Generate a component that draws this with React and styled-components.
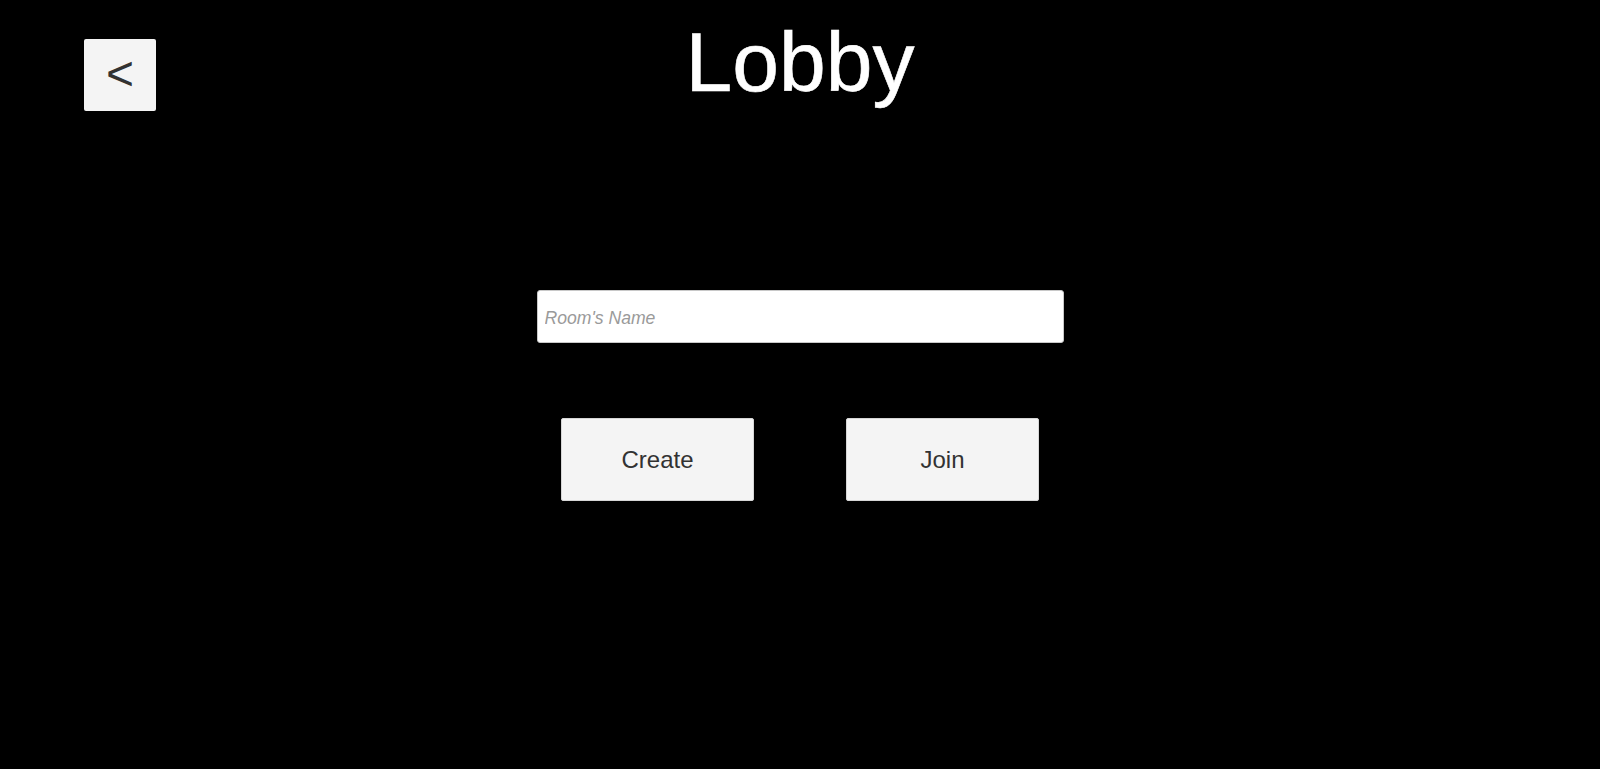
import styled, { createGlobalStyle } from 'styled-components';

const GlobalStyle = createGlobalStyle`
    html, body {
        margin: 0;
        padding: 0;
        background-color: #000;
    }
    * {
        box-sizing: border-box;
    }
`

export default function App () {
    return(
        <Page>
            <GlobalStyle />
            <Header>
                <BackButton>&lt;</BackButton>
                <Title>Lobby</Title>
                <span />
            </Header>
            <Form>
                <RoomInput placeholder="Room's Name" />
                <Actions>
                    <ActionButton>Create</ActionButton>
                    <ActionButton>Join</ActionButton>
                </Actions>
            </Form>
        </Page>
    )
}

const Page = styled.div`
    min-height: 100vh;
    background-color: #000;
    font-family: "Liberation Sans", Arial, sans-serif;
`
const Header = styled.header`
    display: grid;
    grid-template-columns: 1fr auto 1fr;
    align-items: start;
    padding: 20px 84px 0;
`
const BackButton = styled.button`
    width: 72px;
    height: 72px;
    margin-top: 19px;
    border: none;
    border-radius: 2px;
    background-color: #f4f4f4;
    color: #323232;
    font-family: "Liberation Sans", Arial, sans-serif;
    font-size: 48px;
    line-height: 1;
    padding: 0 0 2px;
    cursor: pointer;
`
const Title = styled.h1`
    margin: 0;
    color: #fff;
    font-size: 84px;
    font-weight: 400;
    line-height: 1;
    text-align: center;
    -webkit-text-stroke: 0.6px #fff;
`
const Form = styled.div`
    display: flex;
    flex-direction: column;
    align-items: center;
    padding-top: 179px;
`
const RoomInput = styled.input`
    width: 527px;
    height: 53px;
    border: 1px solid #c8c8c8;
    border-radius: 3px;
    background-color: #fff;
    padding: 3px 7px 0;
    font-family: "Liberation Sans", Arial, sans-serif;
    font-size: 17.6px;
    color: #323232;
    outline: none;
    &::placeholder{
        color: #9a9a9a;
        font-style: italic;
    }
`
const Actions = styled.div`
    display: flex;
    gap: 92px;
    margin-top: 75px;
`
const ActionButton = styled.button`
    width: 193px;
    height: 83px;
    border: 1px solid #d6d6d6;
    border-radius: 2px;
    background-color: #f4f4f4;
    color: #323232;
    font-family: "Liberation Sans", Arial, sans-serif;
    font-size: 24px;
    cursor: pointer;
    &:hover{
        background-color: #e8e8e8;
    }
`
